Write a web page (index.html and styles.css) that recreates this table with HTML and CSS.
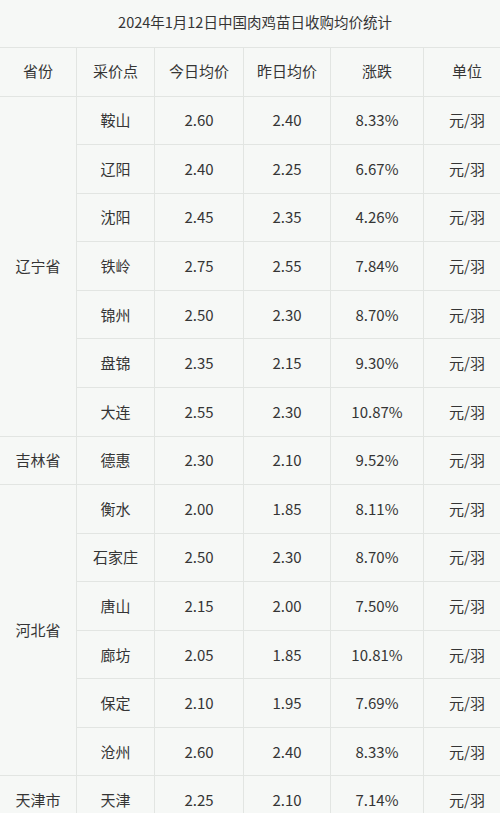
FILE: index.html
```html
<!DOCTYPE html>
<html lang="zh-CN">
<head>
<meta charset="utf-8">
<title>2024年1月12日中国肉鸡苗日收购均价统计</title>
<link rel="stylesheet" href="styles.css">
</head>
<body>
<table class="price-table">
  <colgroup>
    <col class="c-prov"><col class="c-site"><col class="c-today"><col class="c-yest"><col class="c-chg"><col class="c-unit">
  </colgroup>
  <thead>
    <tr class="title-row"><th colspan="6" class="title">2024年1月12日中国肉鸡苗日收购均价统计</th></tr>
    <tr class="head-row"><th>省份</th><th>采价点</th><th>今日均价</th><th>昨日均价</th><th>涨跌</th><th>单位</th></tr>
  </thead>
  <tbody>
    <tr><td rowspan="7">辽宁省</td><td>鞍山</td><td>2.60</td><td>2.40</td><td>8.33%</td><td>元/羽</td></tr>
    <tr><td>辽阳</td><td>2.40</td><td>2.25</td><td>6.67%</td><td>元/羽</td></tr>
    <tr><td>沈阳</td><td>2.45</td><td>2.35</td><td>4.26%</td><td>元/羽</td></tr>
    <tr><td>铁岭</td><td>2.75</td><td>2.55</td><td>7.84%</td><td>元/羽</td></tr>
    <tr><td>锦州</td><td>2.50</td><td>2.30</td><td>8.70%</td><td>元/羽</td></tr>
    <tr><td>盘锦</td><td>2.35</td><td>2.15</td><td>9.30%</td><td>元/羽</td></tr>
    <tr><td>大连</td><td>2.55</td><td>2.30</td><td>10.87%</td><td>元/羽</td></tr>
    <tr><td>吉林省</td><td>德惠</td><td>2.30</td><td>2.10</td><td>9.52%</td><td>元/羽</td></tr>
    <tr><td rowspan="6">河北省</td><td>衡水</td><td>2.00</td><td>1.85</td><td>8.11%</td><td>元/羽</td></tr>
    <tr><td>石家庄</td><td>2.50</td><td>2.30</td><td>8.70%</td><td>元/羽</td></tr>
    <tr><td>唐山</td><td>2.15</td><td>2.00</td><td>7.50%</td><td>元/羽</td></tr>
    <tr><td>廊坊</td><td>2.05</td><td>1.85</td><td>10.81%</td><td>元/羽</td></tr>
    <tr><td>保定</td><td>2.10</td><td>1.95</td><td>7.69%</td><td>元/羽</td></tr>
    <tr><td>沧州</td><td>2.60</td><td>2.40</td><td>8.33%</td><td>元/羽</td></tr>
    <tr><td>天津市</td><td>天津</td><td>2.25</td><td>2.10</td><td>7.14%</td><td>元/羽</td></tr>
  </tbody>
</table>
</body>
</html>
```

FILE: styles.css
```css
html, body {
  margin: 0;
  padding: 0;
  overflow: hidden;
  background: #f6f8f6;
}
body {
  width: 500px;
  height: 813px;
  font-family: "Noto Sans CJK SC", "Noto Sans", sans-serif;
  color: #353535;
}
.price-table {
  border-collapse: collapse;
  table-layout: fixed;
  width: 511px;
  margin-left: -1px;
}
.c-prov { width: 77px; }
.c-site { width: 78px; }
.c-today { width: 89px; }
.c-yest { width: 87px; }
.c-chg { width: 93px; }
.c-unit { width: 87px; }
.price-table th,
.price-table td {
  border: 1px solid #e2e5e2;
  text-align: center;
  vertical-align: middle;
  font-weight: normal;
  font-size: 15px;
  padding: 0;
  height: 47.57px;
  line-height: 20px;
}
.price-table .head-row th {
  height: 45.57px;
  padding-bottom: 2px;
}
.price-table .title {
  border-top: none;
  border-left: none;
  border-right: none;
  font-size: 14.5px;
  height: 44px;
  padding-bottom: 3px;
}
```
